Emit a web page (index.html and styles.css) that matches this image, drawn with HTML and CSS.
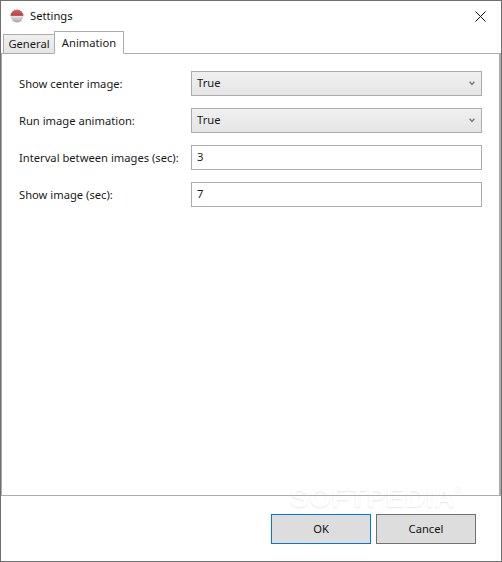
FILE: index.html
```html
<!DOCTYPE html>
<html lang="en">
<head>
<meta charset="utf-8">
<title>Settings</title>
<link rel="stylesheet" href="styles.css">
</head>
<body>
<div class="window">
  <header class="titlebar">
    <svg class="app-icon" width="14" height="14" viewBox="0 0 14 14">
      <defs>
        <linearGradient id="ball" x1="0" y1="0" x2="0" y2="1">
          <stop offset="0" stop-color="#d06a6c"/>
          <stop offset="0.45" stop-color="#c23a40"/>
          <stop offset="0.52" stop-color="#e4e4e4"/>
          <stop offset="1" stop-color="#a0a0a0"/>
        </linearGradient>
      </defs>
      <circle cx="7" cy="7" r="6.5" fill="url(#ball)"/>
    </svg>
    <span class="title">Settings</span>
    <svg class="close" width="11" height="11" viewBox="0 0 11 11">
      <path d="M0.5 0.5L10.5 10.5M10.5 0.5L0.5 10.5" stroke="#111" stroke-width="1" fill="none"/>
    </svg>
  </header>
  <nav class="tabs">
    <div class="tab">General</div>
    <div class="tab active">Animation</div>
  </nav>
  <main class="panel">
    <div class="row">
      <label class="label">Show center image:</label>
      <div class="field select"><span>True</span>
        <svg class="chev" width="6" height="5" viewBox="0 0 6 5"><path d="M0.6 0.8L3 3.4L5.4 0.8" stroke="#777" stroke-width="1.4" fill="none"/></svg>
      </div>
    </div>
    <div class="row">
      <label class="label">Run image animation:</label>
      <div class="field select"><span>True</span>
        <svg class="chev" width="6" height="5" viewBox="0 0 6 5"><path d="M0.6 0.8L3 3.4L5.4 0.8" stroke="#777" stroke-width="1.4" fill="none"/></svg>
      </div>
    </div>
    <div class="row">
      <label class="label">Interval between images (sec):</label>
      <div class="field input"><span>3</span></div>
    </div>
    <div class="row">
      <label class="label">Show image (sec):</label>
      <div class="field input"><span>7</span></div>
    </div>
  </main>
  <footer class="footer">
    <button class="btn default">OK</button>
    <button class="btn">Cancel</button>
  </footer>
  <div class="watermark">SOFTPEDIA<sup>®</sup></div>
</div>
</body>
</html>
```
FILE: styles.css
```css
* { box-sizing: border-box; }
html, body { margin: 0; padding: 0; }
body {
  width: 502px;
  height: 562px;
  background: #fff;
  font-family: "Noto Sans", "Open Sans", sans-serif;
  font-size: 11.2px;
  color: #1a1a1a;
}
.window {
  position: relative;
  width: 502px;
  height: 562px;
  border: 1px solid #6e6e6e;
  display: flex;
  flex-direction: column;
  overflow: hidden;
}
.titlebar {
  height: 31px;
  flex: none;
  display: flex;
  align-items: center;
  padding: 0 15px 1px 9px;
}
.title { margin-left: 6px; margin-bottom: 2px; color: #111; }
.close { margin-left: auto; }
.tabs {
  height: 22px;
  flex: none;
  display: flex;
  align-items: flex-end;
  padding-left: 2px;
  position: relative;
  z-index: 2;
  margin-bottom: -1px;
}
.tab {
  height: 20px;
  width: 52px;
  border: 1px solid #acacac;
  background: linear-gradient(#f0f0f0, #e5e5e5);
  text-align: center;
  line-height: 17px;
  margin-right: -1px;
}
.tab.active {
  height: 23px;
  width: 70px;
  background: #fff;
  border-bottom-color: #fff;
  line-height: 22px;
}
.panel {
  position: relative;
  z-index: 1;
  height: 443px;
  flex: none;
  border: 1px solid #acacac;
  border-right-width: 2px;
  padding: 17px 17px 0 17px;
  display: flex;
  flex-direction: column;
  gap: 12px;
}
.row { display: flex; align-items: center; height: 25px; flex: none; }
.label { width: 172px; flex: none; }
.field {
  width: 292px;
  height: 25px;
  border: 1px solid #acacac;
  background: #fff;
  display: flex;
  align-items: center;
  justify-content: space-between;
  padding: 0 5px;
}
.input { padding-bottom: 2px; }
.select { background: linear-gradient(#f0f0f0, #e5e5e5); padding-bottom: 2px; }
.chev { margin-top: 2px; margin-right: 1px; }
.footer {
  flex: 1;
  display: flex;
  justify-content: flex-end;
  align-items: flex-start;
  gap: 5px;
  padding: 18px 25px 0 0;
}
.btn {
  width: 100px;
  height: 30px;
  border: 1px solid #707070;
  background: #dddddd;
  font: inherit;
  color: #111;
  padding: 0 0 2px;
}
.btn.default { border-color: #0078d7; }
.watermark {
  position: absolute;
  z-index: 0;
  left: 289px;
  top: 481px;
  font-family: "Liberation Sans", sans-serif;
  font-weight: 700;
  font-size: 28px;
  letter-spacing: 0.5px;
  color: #ffffff;
  text-shadow: 0 1px 2px rgba(0, 0, 0, 0.1);
  pointer-events: none;
  white-space: nowrap;
}
.watermark sup { font-size: 10px; font-weight: 400; vertical-align: 14px; }
```
